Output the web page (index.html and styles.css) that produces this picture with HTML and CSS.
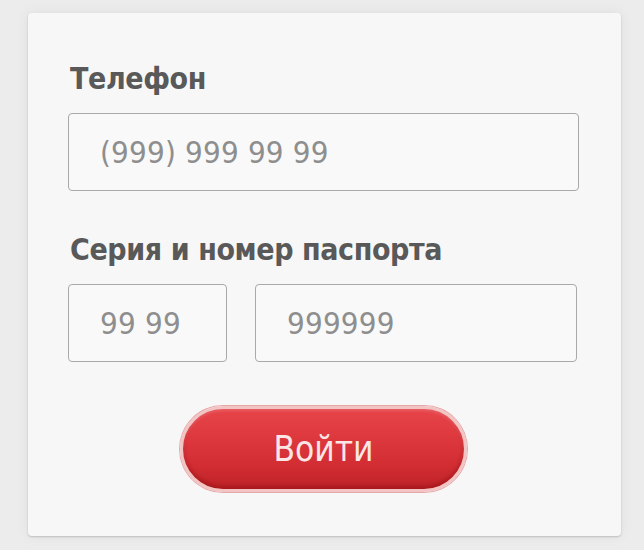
FILE: index.html
```html
<!DOCTYPE html>
<html lang="ru">
<head>
<meta charset="utf-8">
<link rel="stylesheet" href="styles.css">
</head>
<body>
<div class="page">
  <form class="card">
    <div class="field">
      <label class="label">Телефон</label>
      <div class="input wide"><span class="ph">(999) 999 99 99</span></div>
    </div>
    <div class="field">
      <label class="label">Серия и номер паспорта</label>
      <div class="row">
        <div class="input series"><span class="ph">99 99</span></div>
        <div class="input number"><span class="ph">999999</span></div>
      </div>
    </div>
    <div class="actions">
      <button type="button" class="btn">Войти</button>
    </div>
  </form>
</div>
</body>
</html>
```

FILE: styles.css
```css
html, body {
  margin: 0;
  padding: 0;
  background: #ececec;
  font-family: "Liberation Sans Narrow", "DejaVu Sans Condensed", "Roboto Condensed", "Liberation Sans", sans-serif;
}
.page {
  width: 644px;
  height: 550px;
  padding: 13px 23px 0 28px;
  box-sizing: border-box;
}
.card {
  width: 593px;
  height: 523px;
  box-sizing: border-box;
  background: #f7f7f7;
  border-radius: 4px;
  box-shadow: 0 1px 2px rgba(0,0,0,0.18), 0 0 14px rgba(0,0,0,0.06);
  padding: 49px 42px 0 40px;
  display: flex;
  flex-direction: column;
}
.field {
  display: flex;
  flex-direction: column;
}
.field + .field {
  margin-top: 42px;
}
.label {
  font-size: 30px;
  font-weight: bold;
  color: #595959;
  line-height: 34px;
  margin-bottom: 17px;
  padding-left: 2px;
  letter-spacing: -0.4px;
}
.input {
  height: 78px;
  box-sizing: border-box;
  border: 1px solid #a9a9a9;
  border-radius: 4px;
  background: #f9f9f9;
  display: flex;
  align-items: center;
  padding-left: 31px;
}
.ph {
  font-size: 31px;
  color: #8e8e8e;
  letter-spacing: 0.2px;
}
.row {
  display: flex;
  gap: 28px;
}
.series {
  width: 159px;
}
.number {
  width: 322px;
}
.actions {
  display: flex;
  justify-content: center;
  margin-top: 44px;
}
.btn {
  width: 287px;
  height: 86px;
  border-radius: 43px;
  border: 3px solid #f2c4c4;
  box-shadow: 0 0 0 1px #e6a7a7, inset 0 -3px 4px rgba(120,0,0,0.35), inset 0 2px 3px rgba(255,255,255,0.15);
  background: linear-gradient(#e7444a, #d22d33 70%, #be2329);
  color: #fbe6e6;
  font-family: inherit;
  font-size: 35px;
  padding: 0;
  cursor: pointer;
}
```
